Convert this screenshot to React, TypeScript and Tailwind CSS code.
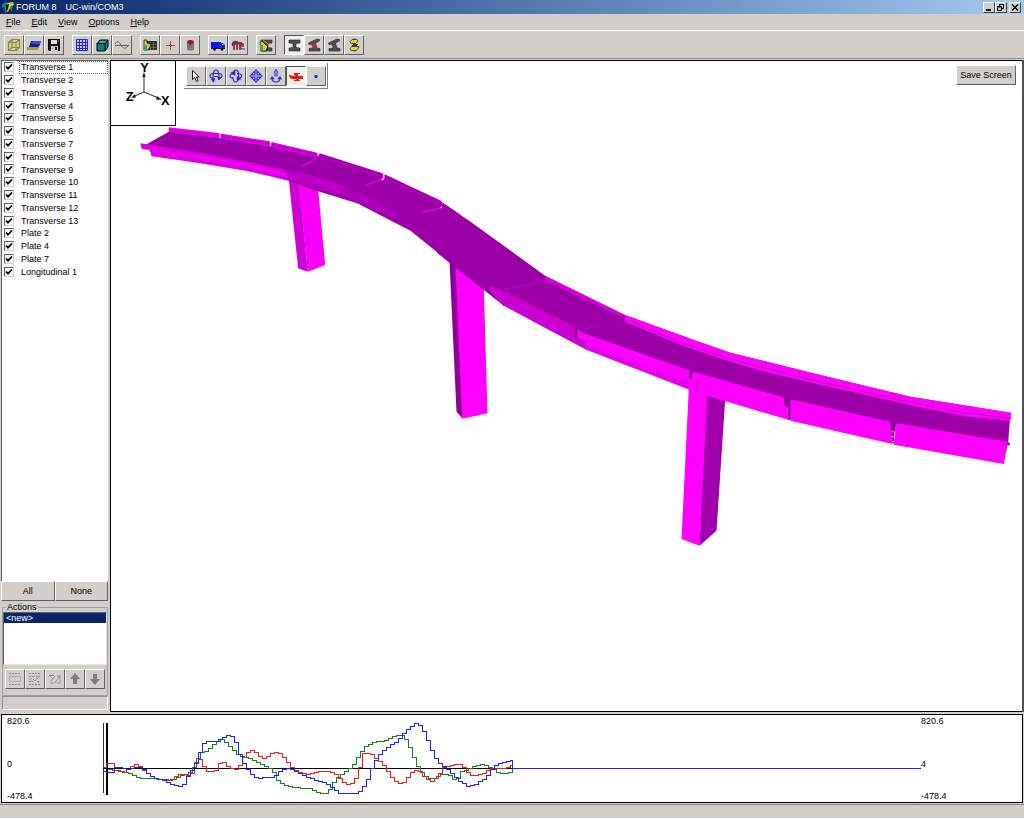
import type { ReactNode } from "react";

const raised =
  "border border-t-white border-l-white border-r-[#606068] border-b-[#606068] bg-[#d2cfcb]";
const pressed =
  "border border-t-[#505050] border-l-[#505050] border-r-white border-b-white bg-[#efeeec]";

function Icon({ children }: { children: ReactNode }) {
  return (
    <svg viewBox="0 0 16 16" className="block size-4" fill="none" stroke="#000" aria-hidden="true">
      {children}
    </svg>
  );
}

type Tool = { name: string; icon: ReactNode; active?: boolean };

function ToolButton({ tool }: { tool: Tool }) {
  return (
    <button
      type="button"
      aria-label={tool.name}
      aria-pressed={tool.active}
      className={`flex size-5 shrink-0 items-center justify-center ${tool.active ? pressed : raised}`}
    >
      <Icon>{tool.icon}</Icon>
    </button>
  );
}

const steelBeam = (
  <path d="M3 3h11v3l-4 .5v4l4 .5v3H3v-3l4-.5v-4L3 6z" fill="#4a5050" stroke="#222" strokeWidth=".6" />
);

const bentBeam = (
  <path
    d="M2.500 6l8.500-4 2.500.5v1.500L9.500 6l1.500 5 3 .5v2.500H3v-2.500l4.500-.5-2-4-2.500.8z"
    fill="#4a5050"
    stroke="#222"
    strokeWidth=".6"
  />
);

const toolGroups: Tool[][] = [
  [
    {
      name: "Wireframe",
      icon: (
        <g stroke="#8c8c10" strokeWidth="1.2">
          <path d="M2.500 5.500h7.500v8H2.500zM6 2.500h7.500v8H6zM2.500 5.500L6 2.500M10 5.500l3.500-3M2.500 13.500l3.500-3M10 13.500l3.500-3" />
        </g>
      ),
    },
    {
      name: "Open",
      icon: (
        <g stroke="none">
          <path d="M5 4h10l-2 6H3z" fill="#1818a8" />
          <path d="M7 4h8l-1 3H6z" fill="#3c50d0" />
          <path d="M1 10h11l1-2v3l-2 2H1z" fill="#a8a020" />
        </g>
      ),
    },
    {
      name: "Save",
      icon: (
        <g stroke="none">
          <path d="M2 2h12v12H3l-1-1z" fill="#111" />
          <path d="M5 3h6v4H5z" fill="#e8e0e0" />
          <path d="M5 9h7v5H5z" fill="#c8c8c8" />
          <path d="M9 10h2v3H9z" fill="#111" />
          <path d="M12 3h1v2h-1z" fill="#e03030" />
        </g>
      ),
    },
  ],
  [
    {
      name: "Grid",
      icon: (
        <path
          d="M2.500 2.500h11v11h-11zM5.500 2v12M8.500 2v12M11.500 2v12M2 5.500h12M2 8.500h12M2 11.500h12"
          stroke="#2020f0"
        />
      ),
    },
    {
      name: "Solid",
      icon: (
        <g strokeWidth="1">
          <path d="M3 6.500L6 3h8v7l-3 4H3z" fill="#008080" />
          <path d="M3 6.500h8V14M11 6.500L14 3" />
          <path d="M6.500 4h6l-2 2h-6z" fill="#30b0b0" stroke="none" />
        </g>
      ),
    },
    {
      name: "Wave",
      icon: (
        <g stroke="#606060">
          <path d="M1 8.500h14" />
          <path d="M1 7c2-3 4-3 6 1s5 4 7 1" />
        </g>
      ),
    },
  ],
  [
    {
      name: "Edit mesh",
      icon: (
        <g>
          <path d="M5 4h10v9H5z" fill="#303028" stroke="none" />
          <path d="M6 7.500h8M6 10.500h8M8.500 5v8M11.500 5v8" stroke="#77776a" strokeWidth=".7" />
          <path d="M2 3h3v3l4 1-1 3-2 3H2z" fill="#d8d040" strokeWidth=".7" />
          <path d="M2 8h3v5H2z" fill="#30a0a0" stroke="none" />
        </g>
      ),
    },
    {
      name: "Node",
      icon: (
        <g stroke="none">
          <path d="M8 4h1v4h4v1H9v4H8V9H4V8h4z" fill="#8a5a5a" />
          <path d="M7 8h3v1H7zM8 7h1v3H8z" fill="#d01010" />
        </g>
      ),
    },
    {
      name: "Cylinder",
      icon: (
        <g stroke="none">
          <path d="M5 5h7v7c0 2-7 2-7 0z" fill="#777" />
          <ellipse cx="8.500" cy="5" rx="3.500" ry="2" fill="#a02020" />
          <path d="M8 3h1v5H8z" fill="#701010" />
        </g>
      ),
    },
  ],
  [
    {
      name: "Vehicle",
      icon: (
        <g stroke="none">
          <path d="M1 5h10v6H1z" fill="#1010ff" />
          <path d="M11 6h2l2 2v3h-4z" fill="#2030a0" />
          <path d="M12 7h1l1 1h-2z" fill="#fff" />
          <path d="M1 11h14v1H1z" fill="#111" />
          <circle cx="4.500" cy="12.500" r="1.300" fill="#111" />
          <circle cx="12" cy="12.500" r="1.300" fill="#111" />
        </g>
      ),
    },
    {
      name: "Influence",
      icon: (
        <g strokeWidth="1.200">
          <path d="M3 9c-2-3 1-6 5-4M11.500 8c-1 2-1 4 1 4h2.500" stroke="#2030e0" />
          <path d="M4 13V7h3v6M7 7l3-1v7M10 7h3v3M3 6l3-1 3 1h3" stroke="#9c1c20" strokeWidth="1.600" />
        </g>
      ),
    },
  ],
  [
    {
      name: "Edit section",
      icon: (
        <g>
          {steelBeam}
          <path d="M2 5l2-1 4 4 2 1-2 5H3z" fill="#d8d030" strokeWidth=".7" />
          <path d="M2 8h3v5H2z" fill="#30a0a0" stroke="none" />
          <path d="M4 2l6 5" stroke="#c0b020" />
        </g>
      ),
    },
  ],
  [
    { name: "Section", icon: steelBeam, active: true },
    {
      name: "Section stress",
      icon: (
        <g>
          {bentBeam}
          <path d="M5 7l5 4M10 7l-4 4" stroke="#e02020" strokeWidth="1.500" />
        </g>
      ),
    },
    { name: "Section strain", icon: bentBeam },
    {
      name: "Springs",
      icon: (
        <g stroke="#333" strokeWidth=".8">
          <path d="M8.500 1.500v13" strokeWidth="2" />
          <path d="M4 4.500l2-2h5l1 1.500-2 2.500H5z" fill="#e0dc18" />
          <path d="M6 8.500h5M7 7.500h5" strokeWidth="1.200" />
          <path d="M4 12l1.500-2.500H13L12.500 11l-2 2.500H5z" fill="#e0dc18" />
        </g>
      ),
    },
  ],
];

const viewTools: Tool[] = [
  {
    name: "Select",
    icon: <path d="M4.500 2.500v9l2.300-2 1.700 4 1.600-.8-1.700-3.700h2.800z" fill="#fff" strokeWidth=".9" />,
  },
  {
    name: "Rotate",
    icon: (
      <g stroke="#2222e8" strokeWidth="1.100">
        <path d="M5 10.500C1 9.500 1 6 5 5.500h6c4 .5 4 4 0 5M5.500 12C4.500 8 5 2 8 2s3.500 6 2.500 10M6 8.500h4" />
        <path d="M13 9.500l-3.500-.5 1.500 3zM3 11l4-.5-1.500 4z" fill="#2222e8" strokeWidth=".4" />
      </g>
    ),
  },
  {
    name: "Orbit",
    icon: (
      <g stroke="#2222e8" strokeWidth="1.100">
        <path d="M5 10.500C1 9.500 1 6.500 5 5.500M9 5.500c6 0 6 4.500 1 5M5.500 5C6 1 10 1 10.500 5s0 9-2.500 9-3-3-3-5" />
        <path d="M2.500 5L7 7.500 7 3zM13 11l-4 1.500V8.500z" fill="#2222e8" strokeWidth=".4" />
      </g>
    ),
  },
  {
    name: "Pan",
    icon: (
      <path
        d="M8 2l2.500 2.500H9V7h2.500V5.500L14 8l-2.500 2.500V9H9v2.500h1.500L8 14l-2.500-2.500H7V9H4.500v1.500L2 8l2.500-2.500V7H7V4.500H5.500z"
        stroke="#2222e8"
        strokeWidth="1.100"
      />
    ),
  },
  {
    name: "Zoom",
    icon: (
      <g stroke="#2222e8" strokeWidth="1.100">
        <path d="M6 4.500L8 2l2 2.500M7 4.500v4M9 4.500v4" />
        <path d="M4 9.500c0 3 2 4.500 4 4.500s4-1.500 4-4.500M2.500 11.500L4 9l2 2M10 11l2-2 1.500 2.500" />
      </g>
    ),
  },
  {
    name: "Fly",
    active: true,
    icon: (
      <g fill="#e81818" stroke="none">
        <path d="M1 7h2l1 1h3V7H6V5h6v1h-2v2h5v3h-4l-1 2H8v-2H4L2 10z" />
        <path d="M6 12h6v1H6z" />
      </g>
    ),
  },
  { name: "Point", icon: <circle cx="8" cy="8.500" r="1.700" fill="#1030e0" stroke="none" /> },
];

const actionTools: Tool[] = [
  {
    name: "New action",
    icon: (
      <g stroke="#8c8c94">
        <path d="M2 2.500h12M2 13.500h12" strokeDasharray="2 1" />
        <path d="M2.500 5.500h11v5h-11z" strokeDasharray="1 1" />
      </g>
    ),
  },
  {
    name: "Edit action",
    icon: (
      <g stroke="#8c8c94">
        <path d="M2 2.500h12M2 13.500h12" strokeDasharray="2 1" />
        <path d="M2 5.500h6M2 10.500h5M2 8h3M6 8l2 2 5-5M9 5.500h3M10 10.500h3" strokeDasharray="2 .5" />
      </g>
    ),
  },
  {
    name: "Delete action",
    icon: (
      <g stroke="#94949a">
        <path d="M2 4.500h5M3 11.500L8 5M3 5l3 3M3 12h4M8 12l5-8M10 5h3v7h-3" />
      </g>
    ),
  },
  { name: "Move up", icon: <path d="M8 2l5 6h-3v5H6V8H3z" fill="#7c7c84" stroke="none" /> },
  { name: "Move down", icon: <path d="M8 14l5-6h-3V3H6v5H3z" fill="#7c7c84" stroke="none" /> },
];

const members = [
  ...Array.from({ length: 13 }, (_, i) => `Transverse ${i + 1}`),
  "Plate 2",
  "Plate 4",
  "Plate 7",
  "Longitudinal 1",
];

function TitleBar() {
  const box =
    "flex h-[11px] w-3 items-center justify-center border border-t-white border-l-white border-r-[#404040] border-b-[#404040] bg-[#d2cfcb]";
  return (
    <header className="flex h-[14px] shrink-0 items-center bg-linear-to-r from-[#0a246a] to-[#a6caf0] pr-[3px] pl-[2px] text-white">
      <svg viewBox="0 0 12 12" className="size-3" aria-hidden="true">
        <path d="M0 3l4-2 3 2-1 7-3 2-1-6-2 1z" fill="#108878" />
        <path d="M5 2l6-1 1 3-3 1-3 6-2-1 2-5z" fill="#e0c830" />
        <path d="M4 4l3-1-1 5-2 3z" fill="#111" />
        <path d="M8 6l3-1-2 6z" fill="#28a040" />
      </svg>
      <h1 className="ml-[2px] flex gap-[9px]">
        <span>FORUM 8</span>
        <span>UC-win/COM3</span>
      </h1>
      <div className="ml-auto flex">
        <button type="button" aria-label="Minimize" className={box}>
          <svg viewBox="0 0 10 9" className="h-[9px] w-[10px]">
            <path d="M2 6h5v2H2z" />
          </svg>
        </button>
        <button type="button" aria-label="Restore" className={box}>
          <svg viewBox="0 0 10 9" className="h-[9px] w-[10px]" fill="none" stroke="#000">
            <path d="M3.500 3V1.500h4v4H6M3 1.500h5M1.500 3.500h4v4h-4zM1 4h5" />
          </svg>
        </button>
        <button type="button" aria-label="Close" className={`ml-[2px] ${box}`}>
          <svg viewBox="0 0 10 9" className="h-[9px] w-[10px]" stroke="#000" strokeWidth="1.400">
            <path d="M2 1.500l6 6M8 1.500l-6 6" />
          </svg>
        </button>
      </div>
    </header>
  );
}

function MenuBar() {
  return (
    <nav className="flex h-4 shrink-0 items-center gap-[11px] pl-[6px]">
      {["File", "Edit", "View", "Options", "Help"].map((m) => (
        <button key={m} type="button">
          <u>{m[0]}</u>
          {m.slice(1)}
        </button>
      ))}
    </nav>
  );
}

function MemberList() {
  return (
    <div className="min-h-0 flex-1 overflow-hidden border-t border-l border-[#606068] bg-white">
      <div className="grid h-[217px] auto-rows-fr">
        {members.map((m, i) => (
          <label key={m} className="flex items-center pl-[2px]">
            <span className="grid size-[10px] shrink-0">
              <input
                type="checkbox"
                defaultChecked
                className="peer size-[10px] appearance-none border border-t-[#606068] border-r-[#d2cfcb] border-b-[#d2cfcb] border-l-[#606068] bg-white [grid-area:1/1]"
              />
              <svg
                viewBox="0 0 10 10"
                className="pointer-events-none invisible size-[10px] [grid-area:1/1] peer-checked:visible"
                fill="none"
                stroke="#000"
                strokeWidth="1.800"
              >
                <path d="M2 4.500l2 2.200 4-4.200" />
              </svg>
            </span>
            <span
              className={`ml-[5px] flex h-full flex-1 items-center border border-dotted pl-px ${i === 0 ? "border-[#606060]" : "border-transparent"}`}
            >
              {m}
            </span>
          </label>
        ))}
      </div>
    </div>
  );
}

function Sidebar() {
  return (
    <aside className="flex w-[110px] shrink-0 flex-col pr-[2px] pl-px">
      <MemberList />
      <div className="grid h-5 shrink-0 grid-cols-2">
        <button type="button" className={raised}>
          All
        </button>
        <button type="button" className={raised}>
          None
        </button>
      </div>
      <fieldset className="mt-px ml-px flex h-[94px] shrink-0 flex-col border border-[#a0a0a0] pb-[5px]">
        <legend className="ml-[3px] px-px leading-[10px]">Actions</legend>
        <select
          size={4}
          aria-label="Actions"
          defaultValue="new"
          className="block h-[53px] w-full shrink-0 appearance-none overflow-hidden border border-t-[#606068] border-r-[#e8e6e2] border-b-[#e8e6e2] border-l-[#606068] bg-white"
        >
          <option
            value="new"
            className="min-h-0 px-[2px] py-0 leading-3 checked:bg-linear-to-r checked:from-[#0a246a] checked:to-[#0a246a] checked:text-white"
          >
            &lt;new&gt;
          </option>
        </select>
        <div className="mt-[4px] flex justify-center">
          {actionTools.map((t) => (
            <ToolButton key={t.name} tool={t} />
          ))}
        </div>
      </fieldset>
      <div className="mb-[2px] ml-px h-[14px] shrink-0 border border-t-[#909090] border-r-white border-b-white border-l-[#909090]" />
    </aside>
  );
}

const deck = "#9a00a6";
const bright = "#ff00ff";
const edge = "#dc00e0";

function Bridge() {
  return (
    <svg
      viewBox="333 183 2730 1950"
      className="block h-full w-full"
      role="img"
      aria-label="Bridge model"
    >
      <g transform="translate(390 345)">
        <path d="M475 195L505 200 532 470 503 460z" fill="#cf00d2" />
        <path d="M503 198L563 225 584 450 532 470z" fill="#f800fa" />
        <path
          d="M115 40L268 56 420 83 560 116 758 178 935 262 990 299 990 467 955 440 840 347 680 265 560 228 475 197 340 160 60 110 48 88 115 50z"
          fill={deck}
        />
        <path d="M115 37L266 54 266 68 115 51z" fill="#e800ea" />
        <path d="M272 56L418 79 418 95 272 70z" fill="#e000e4" />
        <path d="M423 81L560 113 560 127 423 97z" fill="#d400da" />
        <path d="M567 115L756 175 754 186 567 128z" fill="#ae00b8" />
        <path d="M762 178L933 258 930 270 762 190z" fill="#ab00b5" />
        <path
          d="M118 44l148 17M275 64l144 22M425 88l134 31M568 117l186 60M764 181l166 78"
          fill="none"
          stroke="#8a0094"
          strokeWidth="2"
          strokeDasharray="10 5"
        />
        <path
          d="M30 85L60 89 200 112 340 138 460 163 485 192 475 197 350 168 200 143 63 124 58 105 34 102z"
          fill={edge}
        />
        <path
          d="M58 105l142 20 150 25 120 30"
          fill="none"
          stroke="#f300f3"
          strokeWidth="7"
        />
        <path d="M460 163L560 185 645 213 645 242 560 222 475 192z" fill="#bd00c6" />
        <path d="M645 213L720 245 795 288 800 312 720 280 645 240z" fill="#ac00b8" />
        <path d="M500 203l60 12 80 26 160 76" fill="none" stroke="#a800b2" strokeWidth="3" />
        <path
          d="M560 127l-22 15-25 12M758 175v14l-18 10-35 12M936 260v14l-16 8-45 9"
          fill="none"
          stroke="#e800ec"
          strokeWidth="4"
        />
        <path
          d="M268 56v14M420 80v14M563 113v10M760 175v14l-6 7M937 260v12l-6 8"
          fill="none"
          stroke="#ffd8ff"
          strokeWidth="4"
        />
        <path d="M268 70l-25 14M420 96l-25 10" stroke="#bc00c6" strokeWidth="2" />
      </g>
      <g transform="translate(1290 570)">
        <path d="M57 215L80 230 97 686 78 665z" fill="#8d0098" />
        <path d="M75 230L160 298 171 670 95 686z" fill={bright} />
        <path
          d="M35 38L120 95 345 258 583 375 760 440 890 488 990 513 990 615 780 565 465 460 220 347 160 300 55 217 20 188z"
          fill={deck}
        />
        <path d="M345 258L583 375 583 388 345 272z" fill="#d800de" />
        <path d="M345 273l90 43 145 70" fill="none" stroke="#7b0088" strokeWidth="2" />
        <path d="M345 258v15l-28 8-97 17M583 375v14l-30 10-95 17" fill="none" stroke="#c400cc" strokeWidth="3" />
        <path d="M180 286L220 302 300 343 430 407 433 440 465 450 465 478 340 412 220 347 180 308z" fill="#cb00d2" />
        <path d="M185 309l35 20 115 60 130 67" fill="none" stroke="#b200ba" strokeWidth="3" />
        <path d="M220 303v44M220 347l-40-39" fill="none" stroke="#a800b2" strokeWidth="3" />
        <path d="M465 430v48" stroke="#b800c0" strokeWidth="5" />
      </g>
      <g transform="translate(2040 1020)">
        <path d="M25 145L85 165 57 617 3 597z" fill={bright} />
        <path d="M81 160L134 180 108 572 57 617z" fill="#a000ac" />
        <path
          d="M-167 -75L40 0 150 38 410 103 690 170 990 218 983 308 640 255 320 182 35 105 -310 -15z"
          fill={deck}
        />
        <path
          d="M-167 -75L40 0 150 38 410 103 690 170 992 218 990 243 840 227 690 196 410 132 270 100 150 66 0 14 -167 -55z"
          fill={bright}
        />
        <path
          d="M-160 -60L0 7 150 57 390 119 690 187 840 216 990 235"
          fill="none"
          stroke="#8c0095"
          strokeWidth="2"
        />
        <path d="M305 170L334 178 334 208 305 198z" fill={deck} />
        <path d="M624 243L650 249 642 276 628 270z" fill={deck} />
        <path
          d="M-310 -32L-290 -20 30 92 30 150 -285 28 -285 2 -310 -5z"
          fill={bright}
        />
        <path d="M-285 12L30 128 30 150 -285 28z" fill="#e800ec" />
        <path
          d="M38 95L310 172 310 195 325 205 325 240 135 184 25 150 25 110z"
          fill={bright}
        />
        <path d="M330 178L630 245 630 268 636 275 636 312 330 242z" fill={bright} />
        <path d="M645 249L983 305 970 372 640 314z" fill={bright} />
        <path
          d="M30 95v22M-313 -32v26M320 176l-6 20M327 205v34M646 248l-14 20"
          stroke="#80008c"
          strokeWidth="7"
        />
        <path d="M638 262v48" stroke="#500058" strokeWidth="5" strokeDasharray="12 3" />
        <path d="M50 125v30" stroke="#b400c0" strokeWidth="4" />
        <circle cx="984" cy="312" r="5" fill="#207818" />
      </g>
    </svg>
  );
}

function AxisBox() {
  return (
    <svg
      viewBox="0 0 65 65"
      className="block size-[65px] border-r border-b border-black bg-white"
      role="img"
      aria-label="Axes"
    >
      <g stroke="#222" fill="none">
        <path d="M33.500 31.500V14M33.500 31.500L23 36M33.500 31.500L49 38" />
        <path d="M33.500 12l-1.500 4h3zM51 39l-4-3-1 3zM21 37l3-3 1 3z" fill="#222" strokeWidth=".5" />
      </g>
      <g className="text-[13px] font-bold" textAnchor="middle">
        <text x="34" y="11">Y</text>
        <text x="55" y="45">X</text>
        <text x="19" y="41">Z</text>
      </g>
    </svg>
  );
}

function Viewport() {
  return (
    <main className="relative min-w-0 flex-1 border-t border-b border-l border-black bg-white">
      <Bridge />
      <div className="absolute inset-x-0 top-0 flex items-start">
        <AxisBox />
        <div className="mt-[2px] ml-2 flex border-r border-b border-r-[#808088] border-b-[#808088] pt-[3px] pr-px pb-[2px] pl-[2px]">
          {viewTools.map((t) => (
            <ToolButton key={t.name} tool={t} />
          ))}
        </div>
        <button type="button" className={`mt-1 mr-[6px] ml-auto h-5 w-[60px] ${raised}`}>
          Save Screen
        </button>
      </div>
    </main>
  );
}

type Point = [number, number];

const later = (points: Point[]): Point[] => points.map(([x, y]) => [x + 780, y]);

const blue: Point[] = [
  [308, 180], [320, 187], [338, 186], [348, 172], [365, 170], [380, 177], [405, 172], [425, 172],
  [440, 182], [455, 198], [470, 204], [490, 210], [505, 214], [520, 223], [540, 229], [555, 222],
  [565, 200], [575, 188], [583, 165], [597, 150], [603, 120], [612, 100], [630, 92], [655, 92],
  [670, 84], [690, 71], [705, 82], [715, 110], [725, 140], [740, 170], [755, 190], [775, 203],
  ...later([
    [0, 203], [45, 200], [60, 185], [85, 173], [105, 180], [130, 193], [150, 202], [180, 212],
    [205, 220], [225, 238], [245, 250], [295, 250], [310, 235], [325, 210], [340, 170], [355, 140],
    [375, 120], [400, 102], [420, 88], [430, 75], [450, 52], [468, 40], [480, 42], [492, 60],
    [505, 88], [520, 125], [535, 155], [555, 170], [570, 180], [590, 200], [605, 215], [625, 227],
    [645, 224], [670, 210], [685, 195], [700, 175], [715, 160], [735, 155], [757, 151],
  ]),
];

const red: Point[] = [
  [308, 177], [322, 162], [335, 157], [345, 160], [350, 180], [375, 186], [395, 168], [412, 162],
  [425, 170], [440, 185], [460, 200], [480, 207], [500, 211], [515, 210], [530, 198], [545, 190],
  [575, 195], [582, 178], [590, 155], [600, 145], [612, 165], [630, 187], [650, 180], [660, 160],
  [675, 157], [690, 172], [710, 178], [722, 165], [735, 140], [750, 120], [765, 122], [785, 142],
  ...later([
    [15, 145], [35, 130], [52, 125], [68, 132], [80, 150], [100, 172], [120, 185], [150, 193],
    [180, 183], [205, 182], [225, 187], [240, 203], [260, 220], [272, 225], [285, 215], [300, 180],
    [312, 130], [335, 127], [345, 140], [365, 155], [385, 180], [400, 205], [418, 220], [435, 216],
    [450, 195], [465, 180], [480, 182], [495, 200], [515, 214], [535, 202], [550, 172], [570, 168],
    [600, 161], [615, 172], [635, 195], [655, 196], [680, 185], [700, 172], [735, 174], [757, 165],
  ]),
];

const green: Point[] = [
  [325, 177], [370, 183], [390, 188], [410, 200], [430, 203], [480, 206], [520, 210], [545, 197],
  [570, 188], [585, 170], [600, 130], [625, 120], [645, 100], [665, 88], [675, 90], [690, 108],
  [710, 128], [725, 137], [750, 142],
  ...later([
    [0, 160], [20, 167], [40, 180], [55, 210], [75, 225], [110, 232], [150, 234], [180, 248],
    [195, 251], [210, 238], [230, 205], [245, 192], [265, 178], [285, 160], [300, 130], [325, 103],
    [350, 95], [380, 90], [400, 80], [415, 74], [432, 76], [445, 95], [455, 120], [470, 160],
    [490, 190], [505, 203], [520, 206], [540, 197], [552, 188], [570, 195], [590, 212], [605, 185],
    [625, 177], [645, 168], [665, 163], [685, 166], [705, 178], [720, 190], [757, 187],
  ]),
];

function valueAt(points: Point[], x: number) {
  const i = points.findIndex((p) => p[0] >= x);
  if (i < 0) return points[points.length - 1][1];
  if (i === 0) return points[0][1];
  const [x0, y0] = points[i - 1];
  const [x1, y1] = points[i];
  return y0 + ((y1 - y0) * (x - x0)) / (x1 - x0);
}

function stepPath(points: Point[]) {
  const start = points[0][0];
  const end = points[points.length - 1][0];
  let d = "";
  for (let x = start; x < end; x += 12) {
    const y = Math.round(valueAt(points, x + 6) / 3) * 3;
    d += `${d ? "V" : `M${x} `}${y}H${Math.min(x + 12, end)}`;
  }
  return `${d}V177`;
}

function Chart() {
  const labels = "grid grid-rows-[12px_1fr_12px] items-center";
  return (
    <section className="mx-px flex h-[89px] shrink-0 border border-black bg-white">
      <div className={`w-[99px] shrink-0 pl-[5px] ${labels}`}>
        <span>820.6</span>
        <span className="pt-[10px]">0</span>
        <span>-478.4</span>
      </div>
      <svg
        viewBox="303 15 2460 261"
        preserveAspectRatio="none"
        className="block h-full min-w-0 flex-1"
        role="img"
        aria-label="Response history"
      >
        <g fill="none" strokeWidth="3" shapeRendering="crispEdges">
          <path d="M309 39V250" stroke="#333" />
          <path d="M320 38V254" stroke="#000" strokeWidth="6" />
          <path d="M308 176H1540" stroke="#000" />
          <path d="M1537 176H2763" stroke="#2020f0" />
          <path d={stepPath(green)} stroke="#108018" />
          <path d={stepPath(red)} stroke="#f01818" />
          <path d={stepPath(blue)} stroke="#2020f0" />
        </g>
      </svg>
      <div className={`w-[101px] shrink-0 ${labels}`}>
        <span>820.6</span>
        <span className="pt-[10px]">4</span>
        <span>-478.4</span>
      </div>
    </section>
  );
}

export default function App() {
  return (
    <div className="flex h-screen flex-col bg-[#d2cfcb] font-['Liberation_Sans',Arial,sans-serif] text-[9px] leading-3 text-black">
      <TitleBar />
      <MenuBar />
      <div
        role="toolbar"
        aria-label="Main"
        className="flex h-[29px] shrink-0 items-center gap-2 border-t border-b border-t-white border-b-[#909090] pl-1"
      >
        {toolGroups.map((g) => (
          <div key={g[0].name} className="flex">
            {g.map((t) => (
              <ToolButton key={t.name} tool={t} />
            ))}
          </div>
        ))}
      </div>
      <div className="mt-px mb-[2px] flex min-h-0 flex-1 border-r-2 border-[#50505c]">
        <Sidebar />
        <Viewport />
      </div>
      <Chart />
      <footer className="mt-px h-[15px] shrink-0 border-t border-b border-t-[#808080] border-b-white" />
    </div>
  );
}
